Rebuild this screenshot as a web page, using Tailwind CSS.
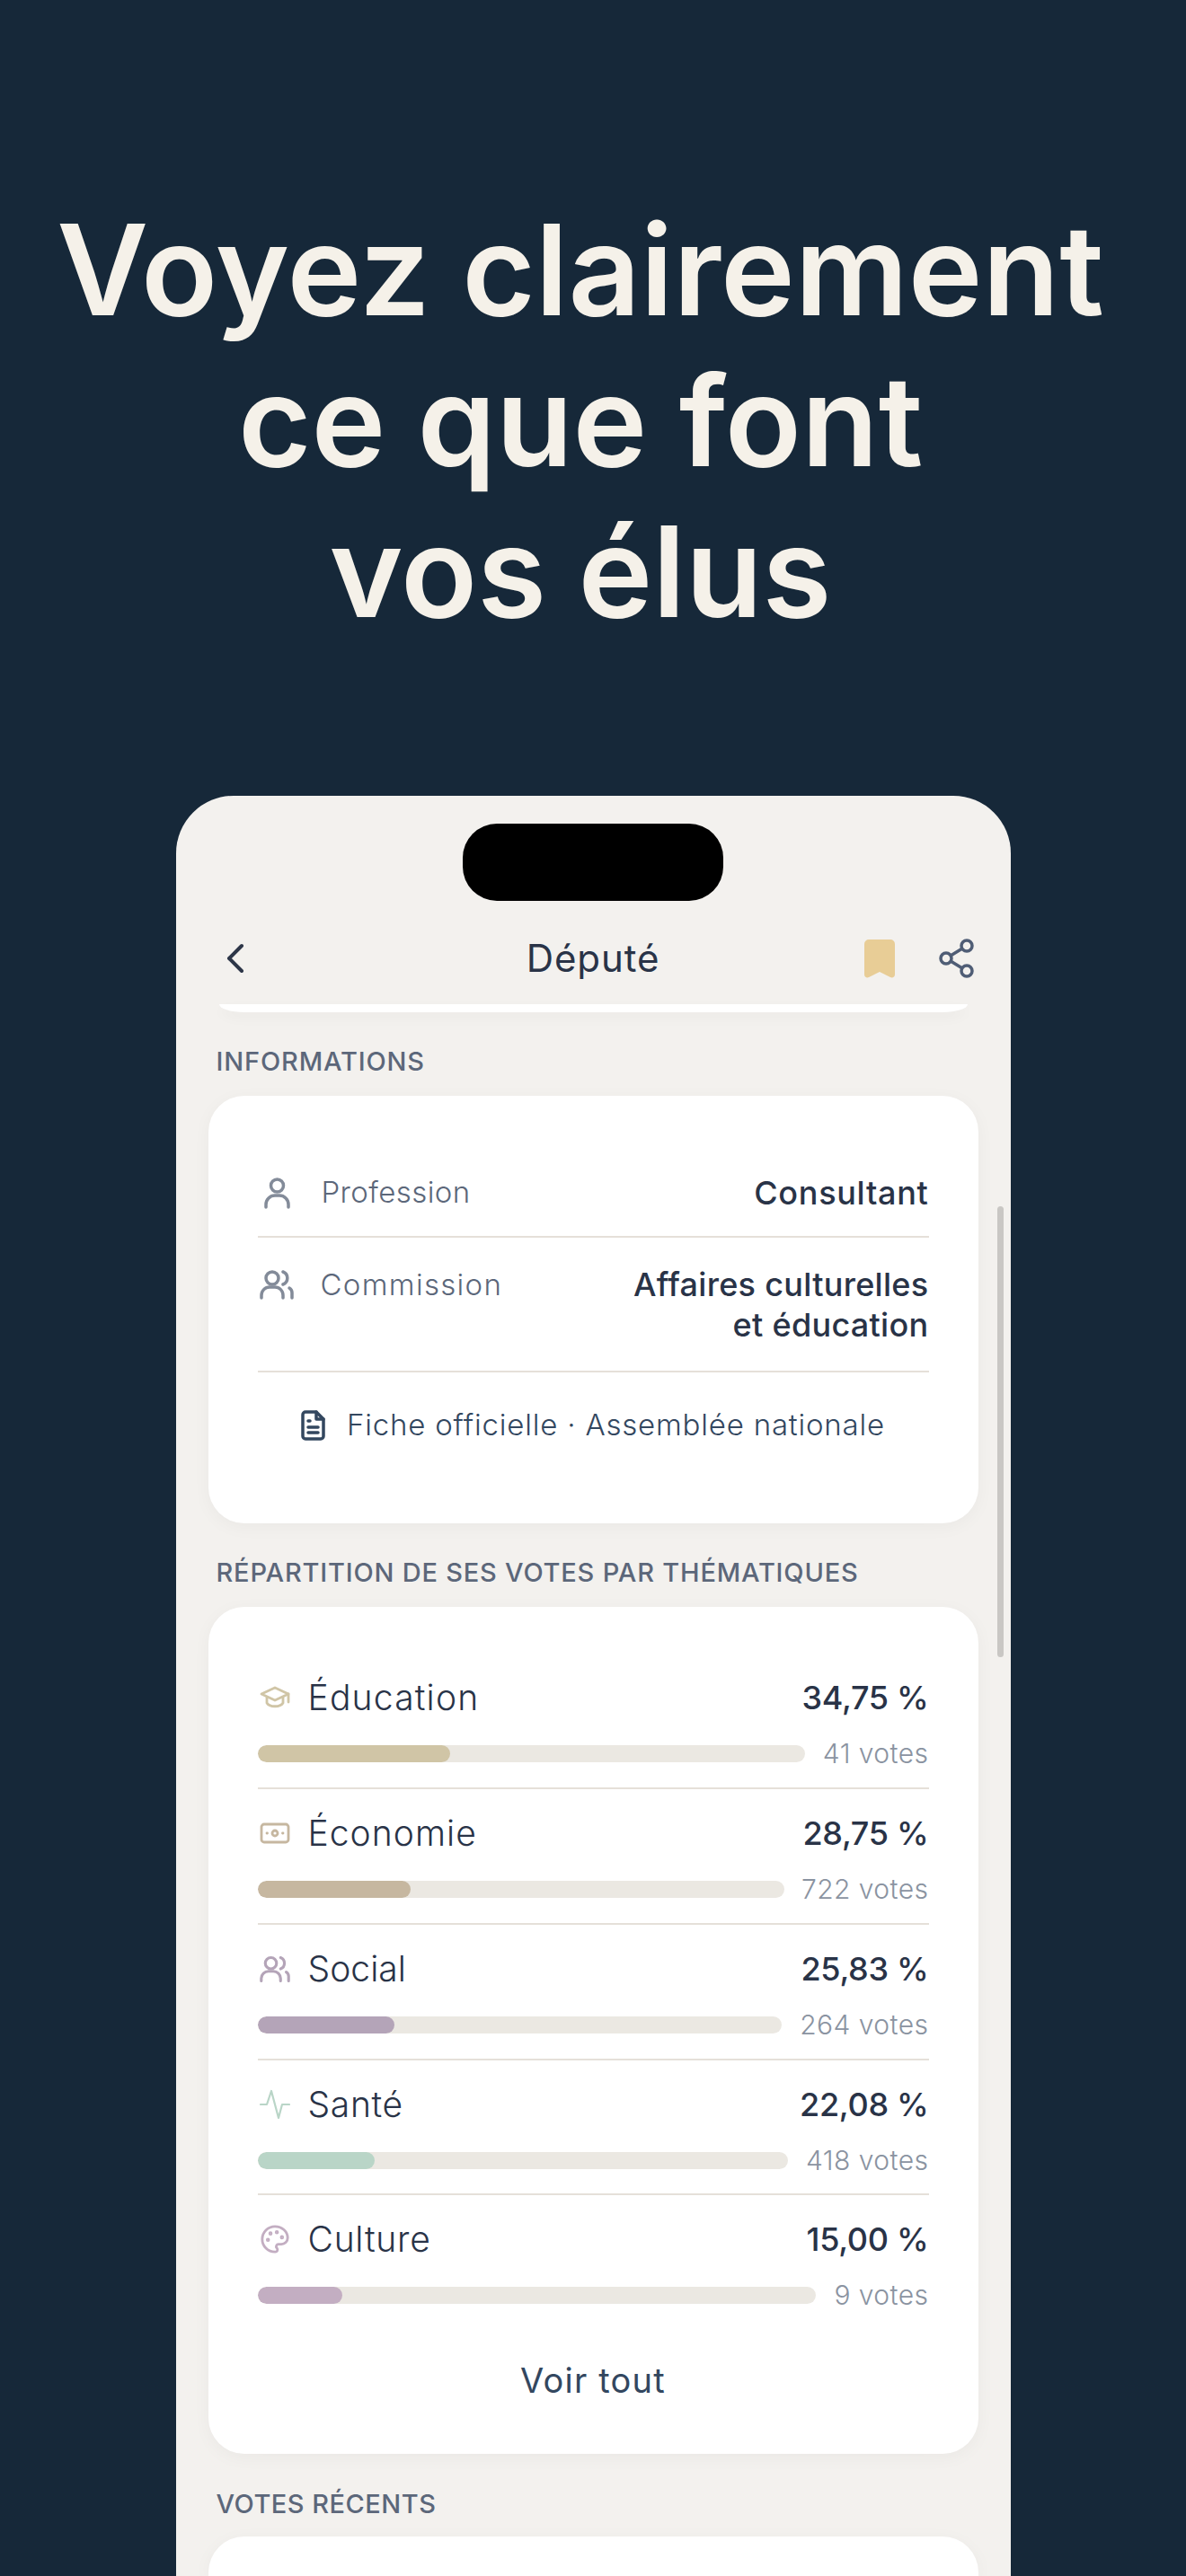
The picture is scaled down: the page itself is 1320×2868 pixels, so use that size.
<!DOCTYPE html>
<html lang="fr">
<head>
  <meta charset="UTF-8" />
  <title>Voyez clairement ce que font vos élus</title>
  <script src="https://cdn.jsdelivr.net/npm/@tailwindcss/browser@4"></script>
</head>
<body class="bg-[#162839] font-[Inter,sans-serif] text-[#293347]">
<div class="h-[2868px] overflow-hidden flex flex-col">

  <!-- Headline -->
  <h1 class="pt-[216px] pr-[28px] text-center text-[140px] leading-[168px] font-semibold text-[#F5F1E9]">Voyez clairement<br>ce que font<br>vos élus</h1>

  <!-- Phone -->
  <div class="relative mt-[166px] mx-auto w-[929px] flex-1 bg-[#F3F1EE] rounded-t-[64px] overflow-hidden flex flex-col">
    <div class="mt-[31px] mx-auto w-[290px] h-[86px] shrink-0 bg-black rounded-[38px]"></div>

    <!-- Nav bar -->
    <div class="mt-[34px] h-[60px] shrink-0 px-[40px] grid grid-cols-[1fr_auto_1fr] items-center">
      <svg class="ml-[16px]" width="20" height="34" viewBox="0 0 20 34" fill="none" stroke="#2D3648" stroke-width="4" stroke-linecap="round" stroke-linejoin="round"><path d="M17 3 L3 17 L17 31"/></svg>
      <div class="text-[42px] leading-[60px] tracking-[0.9px]">Député</div>
      <div class="flex justify-end items-center gap-[49px]">
        <svg width="34" height="43" viewBox="0 0 34 43" fill="#E8CD96"><path d="M5 0 H29 a5 5 0 0 1 5 5 V39 c0 3-3 4-5 3 L17 36 L5 42 c-2 1-5 0-5-3 V5 a5 5 0 0 1 5-5z"/></svg>
        <svg width="40" height="44" viewBox="0 0 40 44" fill="none" stroke="#4F5D75" stroke-width="3.5"><circle cx="8" cy="22" r="6"/><circle cx="31" cy="8" r="6"/><circle cx="31" cy="36" r="6"/><path d="M13 19 L26 11 M13 25 L26 33"/></svg>
      </div>
    </div>

    <div class="px-[36px] flex-1 flex flex-col">
      <!-- bottom of the card above, scrolled away -->
      <div class="mt-[21px] mx-[12px] h-[9px] shrink-0 bg-white rounded-b-[28px_9px] shadow-[0_6px_14px_rgba(0,0,0,0.04)]"></div>

      <div class="mt-[38px] px-[9px] text-[29px] leading-[34px] font-medium tracking-[0.85px] text-[#5C677A]">INFORMATIONS</div>

      <!-- Informations -->
      <div class="mt-[21px] h-[476px] shrink-0 bg-white rounded-[40px] shadow-[0_4px_20px_rgba(0,0,0,0.04)] px-[55px] pt-[58px]">
        <div class="h-[100px] pt-[28px] border-b-2 border-[#E5E0D9] flex justify-between items-start">
          <div class="flex items-center h-[44px] gap-[35px]">
            <svg class="ml-[7px]" width="29" height="35" viewBox="0 0 29 35" fill="none" stroke="#838B99" stroke-width="3.5" stroke-linecap="round"><circle cx="14.5" cy="9" r="7"/><path d="M2 33 v-3 a10 10 0 0 1 10-10 h5 a10 10 0 0 1 10 10 v3"/></svg>
            <span class="text-[33px] font-light tracking-[0.4px] text-[#5C677A]">Profession</span>
          </div>
          <span class="text-[36px] leading-[44px] font-medium tracking-[0.7px]">Consultant</span>
        </div>
        <div class="h-[150px] pt-[30px] border-b-2 border-[#E5E0D9] flex justify-between items-start">
          <div class="flex items-center h-[45px] gap-[30px]">
            <svg class="ml-[2px]" width="38" height="33" viewBox="0 0 38 33" fill="none" stroke="#838B99" stroke-width="3.5" stroke-linecap="round"><circle cx="14" cy="9" r="7"/><path d="M26 2 a7.5 7.5 0 0 1 0 14"/><path d="M2 31 v-3 a9 9 0 0 1 9-9 h6 a9 9 0 0 1 9 9 v3"/><path d="M33 20 a6 6 0 0 1 3 5 v6"/></svg>
            <span class="text-[33px] font-light tracking-[1.3px] text-[#5C677A]">Commission</span>
          </div>
          <div class="text-right text-[36px] leading-[45px] font-medium tracking-[0.3px]">Affaires culturelles<br>et éducation</div>
        </div>
        <div class="mt-[29px] h-[60px] flex justify-center items-center gap-[24px]">
          <svg width="27" height="34" viewBox="0 0 27 34" fill="none" stroke="#33475F" stroke-width="3.5" stroke-linecap="round" stroke-linejoin="round"><path d="M5 2 H17 L25 10 V29 a3 3 0 0 1-3 3 H5 a3 3 0 0 1-3-3 V5 a3 3 0 0 1 3-3z"/><path d="M17 2 v8 h8"/><path d="M8 12 h2 M8 19 h11 M8 25 h11"/></svg>
          <span class="text-[33px] font-light tracking-[0.8px] text-[#33475F]">Fiche officielle · Assemblée nationale</span>
        </div>
      </div>

      <div class="mt-[38px] px-[9px] text-[29px] leading-[34px] font-medium tracking-[0.8px] text-[#5C677A]">RÉPARTITION DE SES VOTES PAR THÉMATIQUES</div>

      <!-- Votes by theme -->
      <div class="mt-[21px] h-[943px] shrink-0 bg-white rounded-[40px] shadow-[0_4px_20px_rgba(0,0,0,0.04)] px-[55px] pt-[52px]">

        <div class="h-[151px] pt-[27px] border-b-2 border-[#E5E0D9]">
          <div class="h-[44px] flex justify-between items-center">
            <div class="flex items-center gap-[20px]">
              <svg class="ml-[2px]" width="34" height="26" viewBox="0 0 34 26" fill="none" stroke="#D0C5A6" stroke-width="2.8" stroke-linecap="round" stroke-linejoin="round"><path d="M17 2 L32 9 L17 16 L2 9Z"/><path d="M8 13 v6 c3 5 15 5 18 0 v-6"/><path d="M32 9 v9"/></svg>
              <span class="text-[39px] font-light tracking-[1.2px]">Éducation</span>
            </div>
            <span class="text-[36px] font-medium tracking-[-0.3px]">34,75 %</span>
          </div>
          <div class="mt-[31px] flex justify-between items-center h-[19px]">
            <div class="w-[609px] h-[19px] rounded-full bg-[#EBE8E2] overflow-hidden"><div class="w-[214px] h-full rounded-full bg-[#D0C5A6]"></div></div>
            <span class="text-[30px] font-light tracking-[0.45px] text-[#8A93A1]">41 votes</span>
          </div>
        </div>

        <div class="h-[151px] pt-[27px] border-b-2 border-[#E5E0D9]">
          <div class="h-[44px] flex justify-between items-center">
            <div class="flex items-center gap-[20px]">
              <svg class="ml-[2px]" width="34" height="24" viewBox="0 0 34 24" fill="none" stroke="#C6B7A0" stroke-width="2.8" stroke-linecap="round"><rect x="2" y="2" width="30" height="20" rx="3"/><circle cx="17" cy="12" r="3"/><path d="M8 12 h.5 M25.5 12 h.5"/></svg>
              <span class="text-[39px] font-light tracking-[1.05px]">Économie</span>
            </div>
            <span class="text-[36px] font-medium tracking-[-0.3px]">28,75 %</span>
          </div>
          <div class="mt-[31px] flex justify-between items-center h-[19px]">
            <div class="w-[586px] h-[19px] rounded-full bg-[#EBE8E2] overflow-hidden"><div class="w-[170px] h-full rounded-full bg-[#C6B7A0]"></div></div>
            <span class="text-[30px] font-light tracking-[0.45px] text-[#8A93A1]">722 votes</span>
          </div>
        </div>

        <div class="h-[151px] pt-[27px] border-b-2 border-[#E5E0D9]">
          <div class="h-[44px] flex justify-between items-center">
            <div class="flex items-center gap-[20px]">
              <svg class="ml-[2px]" width="34" height="31" viewBox="0 0 38 33" fill="none" stroke="#B4A4B8" stroke-width="3.5" stroke-linecap="round"><circle cx="14" cy="9" r="7"/><path d="M26 2 a7.5 7.5 0 0 1 0 14"/><path d="M2 31 v-3 a9 9 0 0 1 9-9 h6 a9 9 0 0 1 9 9 v3"/><path d="M33 20 a6 6 0 0 1 3 5 v6"/></svg>
              <span class="text-[39px] font-light tracking-[0.05px]">Social</span>
            </div>
            <span class="text-[36px] font-medium tracking-[-0.3px]">25,83 %</span>
          </div>
          <div class="mt-[31px] flex justify-between items-center h-[19px]">
            <div class="w-[583px] h-[19px] rounded-full bg-[#EBE8E2] overflow-hidden"><div class="w-[152px] h-full rounded-full bg-[#B4A4B8]"></div></div>
            <span class="text-[30px] font-light tracking-[0.45px] text-[#8A93A1]">264 votes</span>
          </div>
        </div>

        <div class="h-[150px] pt-[27px] border-b-2 border-[#E5E0D9]">
          <div class="h-[44px] flex justify-between items-center">
            <div class="flex items-center gap-[20px]">
              <svg class="ml-[2px]" width="34" height="34" viewBox="0 0 34 34" fill="none" stroke="#B9D5C7" stroke-width="2.2" stroke-linecap="round" stroke-linejoin="round"><path d="M1 17 H8 L13 2 L21 32 L25 17 H33"/></svg>
              <span class="text-[39px] font-light tracking-[0.7px]">Santé</span>
            </div>
            <span class="text-[36px] font-medium tracking-[-0.3px]">22,08 %</span>
          </div>
          <div class="mt-[31px] flex justify-between items-center h-[19px]">
            <div class="w-[590px] h-[19px] rounded-full bg-[#EBE8E2] overflow-hidden"><div class="w-[130px] h-full rounded-full bg-[#B9D5C7]"></div></div>
            <span class="text-[30px] font-light tracking-[0.45px] text-[#8A93A1]">418 votes</span>
          </div>
        </div>

        <div class="pt-[27px]">
          <div class="h-[44px] flex justify-between items-center">
            <div class="flex items-center gap-[20px]">
              <svg class="ml-[2px]" width="34" height="34" viewBox="0 0 24 24" fill="none" stroke="#C3AEC2" stroke-width="2" stroke-linecap="round" stroke-linejoin="round"><path d="M12 22a1 1 0 0 1 0-20 10 9 0 0 1 10 9 5 5 0 0 1-5 5h-2.25a1.75 1.75 0 0 0-1.4 2.8l.3.4a1.75 1.75 0 0 1-1.4 2.8z"/><circle cx="13.5" cy="6.5" r=".6" fill="#C3AEC2"/><circle cx="17.5" cy="10.5" r=".6" fill="#C3AEC2"/><circle cx="6.5" cy="12.5" r=".6" fill="#C3AEC2"/><circle cx="8.5" cy="7.5" r=".6" fill="#C3AEC2"/></svg>
              <span class="text-[39px] font-light tracking-[0.75px]">Culture</span>
            </div>
            <span class="text-[36px] font-medium tracking-[-0.3px]">15,00 %</span>
          </div>
          <div class="mt-[31px] flex justify-between items-center h-[19px]">
            <div class="w-[621px] h-[19px] rounded-full bg-[#EBE8E2] overflow-hidden"><div class="w-[94px] h-full rounded-full bg-[#C3AEC2]"></div></div>
            <span class="text-[30px] font-light tracking-[0.45px] text-[#8A93A1]">9 votes</span>
          </div>
        </div>

        <div class="mt-[63px] text-center text-[38px] leading-[44px] tracking-[1.2px] text-[#33475F]">Voir tout</div>
      </div>

      <div class="mt-[39px] px-[9px] text-[29px] leading-[34px] font-medium tracking-[0.5px] text-[#5C677A]">VOTES RÉCENTS</div>
      <div class="mt-[19px] flex-1 bg-white rounded-t-[40px] shadow-[0_4px_20px_rgba(0,0,0,0.04)]"></div>
    </div>

    <!-- Scrollbar -->
    <div class="absolute left-[914px] top-[457px] w-[7px] h-[502px] rounded-full bg-[#C9C7C4]"></div>
  </div>
</div>
</body>
</html>
